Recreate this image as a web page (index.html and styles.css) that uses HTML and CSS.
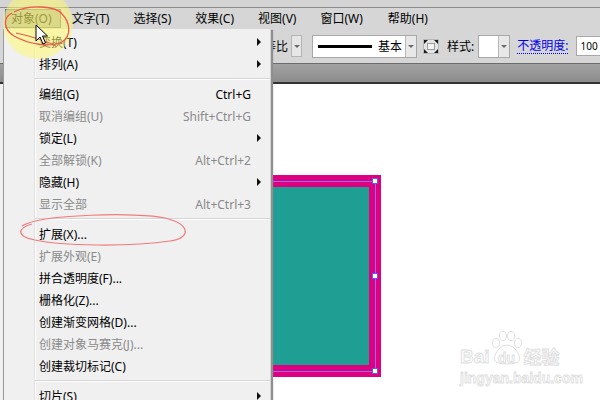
FILE: index.html
```html
<!DOCTYPE html>
<html lang="zh-CN">
<head>
<meta charset="utf-8">
<title>Illustrator 对象菜单</title>
<link rel="stylesheet" href="styles.css">
</head>
<body>
<div class="app">
  <div class="titlestrip"></div>
  <div class="menubar">
    <span class="mi active">对象(O)</span>
    <span class="mi">文字(T)</span>
    <span class="mi">选择(S)</span>
    <span class="mi">效果(C)</span>
    <span class="mi">视图(V)</span>
    <span class="mi">窗口(W)</span>
    <span class="mi help">帮助(H)</span>
  </div>
  <div class="toolbar">
    <span class="tb-text ratio">等比</span>
    <span class="dd-btn"><i class="tri-down"></i></span>
    <div class="stroke-combo">
      <span class="stroke-line"></span>
      <span class="stroke-name">基本</span>
      <span class="dd-part"><i class="tri-down"></i></span>
    </div>
    <span class="fit-icon">
      <svg width="16" height="15" viewBox="0 0 16 15">
        <rect x="0.5" y="0.5" width="15" height="14" fill="#e4e4e4" stroke="#b8b8b8"/>
        <rect x="4.5" y="4.5" width="7" height="6" fill="#f4f4f4" stroke="#9a9a9a"/>
        <path d="M1 1h4L1 5z M15 1h-4l4 4z M1 14h4L1 10z M15 14h-4l4-4z" fill="#1a1a1a"/>
      </svg>
    </span>
    <span class="tb-text style-label">样式:</span>
    <div class="swatch-combo">
      <span class="swatch"></span>
      <span class="dd-part"><i class="tri-down"></i></span>
    </div>
    <span class="opacity-link">不透明度:</span>
    <span class="num-input">100</span>
  </div>
  <div class="docbar"></div>
  <div class="canvas">
    <div class="leftpanel"></div>
    <div class="art-outer"></div>
    <div class="art-inner"></div>
    <div class="sel-v"></div>
    <div class="sel-h sel-top"></div>
    <div class="sel-h sel-bottom"></div>
    <span class="handle h1"></span>
    <span class="handle h2"></span>
    <span class="handle h3"></span>
    <div class="watermark">
      <div class="wm-logo">
        <span class="wm-bai">Bai</span>
        <span class="wm-paw">
          <svg class="paw-svg" width="36" height="36" viewBox="0 0 36 36">
            <g fill="#fff" stroke="#e2e2e2" stroke-width="1">
              <ellipse cx="7" cy="13" rx="3.5" ry="4.5"/>
              <ellipse cx="14" cy="6" rx="3.5" ry="4.5"/>
              <ellipse cx="22" cy="6" rx="3.5" ry="4.5"/>
              <ellipse cx="29" cy="13" rx="3.5" ry="4.5"/>
              <path d="M18 15 C10 15 3 27 6 31 C9 35 27 35 30 31 C33 27 26 15 18 15 Z"/>
            </g>
          </svg>
          <span class="wm-du">du</span>
        </span>
        <span class="wm-cn">经验</span>
      </div>
      <div class="wm-url">jingyan.baidu.com</div>
    </div>
  </div>

  <div class="menu">
    <div class="item"><span class="label">变换(T)</span><span class="key"></span><span class="arrow"></span></div>
    <div class="item"><span class="label">排列(A)</span><span class="key"></span><span class="arrow"></span></div>
    <div class="sep"></div>
    <div class="item"><span class="label">编组(G)</span><span class="key">Ctrl+G</span><span class="noarrow"></span></div>
    <div class="item disabled"><span class="label">取消编组(U)</span><span class="key">Shift+Ctrl+G</span><span class="noarrow"></span></div>
    <div class="item"><span class="label">锁定(L)</span><span class="key"></span><span class="arrow"></span></div>
    <div class="item disabled"><span class="label">全部解锁(K)</span><span class="key">Alt+Ctrl+2</span><span class="noarrow"></span></div>
    <div class="item"><span class="label">隐藏(H)</span><span class="key"></span><span class="arrow"></span></div>
    <div class="item disabled"><span class="label">显示全部</span><span class="key">Alt+Ctrl+3</span><span class="noarrow"></span></div>
    <div class="sep"></div>
    <div class="item"><span class="label">扩展(X)...</span><span class="key"></span><span class="noarrow"></span></div>
    <div class="item disabled"><span class="label">扩展外观(E)</span><span class="key"></span><span class="noarrow"></span></div>
    <div class="item"><span class="label">拼合透明度(F)...</span><span class="key"></span><span class="noarrow"></span></div>
    <div class="item"><span class="label">栅格化(Z)...</span><span class="key"></span><span class="noarrow"></span></div>
    <div class="item"><span class="label">创建渐变网格(D)...</span><span class="key"></span><span class="noarrow"></span></div>
    <div class="item disabled"><span class="label">创建对象马赛克(J)...</span><span class="key"></span><span class="noarrow"></span></div>
    <div class="item"><span class="label">创建裁切标记(C)</span><span class="key"></span><span class="noarrow"></span></div>
    <div class="sep"></div>
    <div class="item"><span class="label">切片(S)</span><span class="key"></span><span class="arrow"></span></div>
  </div>

  <div class="glow"></div>
  <svg class="marks" width="600" height="400" viewBox="0 0 600 400">
    <path d="M14 12 C30 4 56 6 62 14 C70 22 72 36 62 42 C50 48 28 44 14 36 C4 30 2 18 12 13" fill="none" stroke="#f0574f" stroke-width="1.3"/>
    <path d="M16 33 C30 36 44 40 56 46" fill="none" stroke="#f0574f" stroke-width="1.2"/>
    <path d="M22 226 C40 214 140 212 165 218 C190 224 192 238 170 241 C130 247 60 246 35 240 C15 236 18 228 32 224" fill="none" stroke="#f27b7b" stroke-width="1.2"/>
  </svg>
  <svg class="cursor" width="14" height="22" viewBox="0 0 14 22">
    <path d="M1 1 L1 17 L5 13 L8 20 L10.5 19 L7.5 12 L12.5 12 Z" fill="#ffffff" stroke="#000000" stroke-width="1" stroke-linejoin="miter"/>
  </svg>
</div>
</body>
</html>
```

FILE: styles.css
```css
* { box-sizing: border-box; }
html, body { margin: 0; padding: 0; }
body {
  width: 600px;
  height: 400px;
  overflow: hidden;
  font-family: "Noto Sans", "Noto Sans CJK SC", sans-serif;
  font-size: 12px;
  color: #000;
  background: #fff;
}
.app {
  position: relative;
  width: 600px;
  height: 400px;
  display: flex;
  flex-direction: column;
  overflow: hidden;
}
.titlestrip {
  height: 8px;
  background: #d4d4d4;
  border-bottom: 1px solid #8c8c8c;
  flex: none;
}
.menubar {
  height: 21px;
  background: #d6d6d6;
  display: flex;
  align-items: center;
  padding-left: 5px;
  flex: none;
}
.mi {
  flex: none;
  height: 19px;
  line-height: 18px;
  padding: 0 7px 0 5px;
  margin-right: 10px;
  border: 1px solid transparent;
  white-space: nowrap;
}
.mi.active {
  background: #ababab;
  border-color: #6f6f6f;
  margin-right: 5px;
  padding-right: 8px;
}
.mi.help { margin-left: 1px; }
.toolbar {
  height: 34px;
  background: #d6d6d6;
  display: flex;
  align-items: center;
  flex: none;
  overflow: hidden;
}
.toolbar > * { flex: none; }
.tb-text { white-space: nowrap; }
.ratio { margin-left: 264px; }
.dd-btn {
  width: 11px;
  height: 22px;
  margin-left: 3px;
  background: #e6e6e6;
  border: 1px solid #b4b4b4;
  display: flex;
  align-items: center;
  justify-content: center;
}
.tri-down {
  width: 0;
  height: 0;
  border-left: 3px solid transparent;
  border-right: 3px solid transparent;
  border-top: 3px solid #6a6a6a;
}
.stroke-combo {
  margin-left: 10px;
  width: 105px;
  height: 23px;
  background: #fff;
  border: 1px solid #a8a8a8;
  display: flex;
  align-items: center;
}
.stroke-line {
  flex: none;
  width: 54px;
  height: 3px;
  background: #000;
  margin-left: 5px;
}
.stroke-name {
  margin-left: 6px;
  flex: 1;
  white-space: nowrap;
}
.dd-part {
  flex: none;
  width: 11px;
  height: 100%;
  background: #e8e8e8;
  border-left: 1px solid #b8b8b8;
  display: flex;
  align-items: center;
  justify-content: center;
}
.fit-icon {
  margin-left: 6px;
  width: 16px;
  height: 15px;
  display: flex;
}
.style-label { margin-left: 8px; }
.swatch-combo {
  margin-left: 4px;
  width: 32px;
  height: 23px;
  border: 1px solid #a8a8a8;
  background: #fff;
  display: flex;
}
.swatch { flex: 1; background: #fff; }
.opacity-link {
  margin-left: 7px;
  color: #0000ee;
  border-bottom: 1px dotted #0000ee;
  line-height: 14px;
  white-space: nowrap;
}
.num-input {
  margin-left: 8px;
  width: 30px;
  height: 20px;
  background: #fff;
  border: 1px solid #a8a8a8;
  font-size: 10px;
  line-height: 18px;
  padding-left: 3px;
}
.docbar {
  height: 21px;
  flex: none;
  border-top: 1px solid #6c6c6c;
  border-bottom: 2px solid #333;
  background: linear-gradient(#a2a2a2, #8c8c8c);
}
.canvas {
  position: relative;
  flex: 1;
  background: #fff;
}
.leftpanel {
  position: absolute;
  left: 0; top: 0; bottom: 0;
  width: 4px;
  background: #efefef;
}
.art-outer {
  position: absolute;
  left: 230px;
  top: 91px;
  width: 151px;
  height: 202px;
  background: #dd0080;
}
.art-inner {
  position: absolute;
  left: 230px;
  top: 103px;
  width: 139px;
  height: 178px;
  background: #1f9e94;
}
.sel-v {
  position: absolute;
  left: 375px;
  top: 97px;
  width: 1px;
  height: 190px;
  background: #8a6cff;
}
.sel-h {
  position: absolute;
  left: 230px;
  width: 146px;
  height: 1px;
  background: #8a6cff;
}
.sel-top { top: 97px; }
.sel-bottom { top: 287px; }
.handle {
  position: absolute;
  width: 6px;
  height: 6px;
  background: #fff;
  border: 1px solid #5a5aff;
}
.h1 { left: 372px; top: 94px; }
.h2 { left: 372px; top: 189px; }
.h3 { left: 372px; top: 284px; }
.watermark {
  position: absolute;
  left: 460px;
  top: 250px;
  color: #fbfbfb;
  -webkit-text-stroke: 0.8px #dedede;
}
.wm-logo {
  display: flex;
  align-items: flex-end;
  height: 32px;
  white-space: nowrap;
}
.wm-bai {
  font-family: "Liberation Sans", sans-serif;
  font-size: 19px;
  font-weight: bold;
  line-height: 18px;
}
.wm-paw {
  position: relative;
  width: 34px;
  height: 32px;
  display: flex;
  align-items: flex-end;
  justify-content: center;
}
.paw-svg {
  position: absolute;
  left: -1px;
  top: -4px;
}
.wm-du {
  position: relative;
  font-family: "Liberation Sans", sans-serif;
  font-size: 14px;
  font-weight: bold;
  line-height: 16px;
}
.wm-cn {
  font-family: "Noto Sans CJK SC", sans-serif;
  font-size: 18px;
  font-weight: bold;
  line-height: 20px;
}
.wm-url {
  font-family: "Liberation Sans", sans-serif;
  font-size: 14px;
  font-weight: bold;
  margin-top: 5px;
  line-height: 15px;
}
.menu {
  position: absolute;
  left: 3px;
  top: 29px;
  width: 268px;
  height: 380px;
  background: #f0f0f0;
  border-left: 1px solid #9a9a9a;
  border-right: 1px solid #d4d4d4;
  box-shadow: 3px 0 1px -1px #8f8f8f;
  padding-top: 2px;
}
.menu::before {
  content: "";
  position: absolute;
  left: 30px;
  top: 0;
  bottom: 0;
  width: 1px;
  background: #e0e0e0;
  border-right: 1px solid #fff;
  box-sizing: content-box;
}
.item {
  position: relative;
  height: 22px;
  display: flex;
  align-items: center;
  padding-left: 35px;
}
.label { flex: 1; white-space: nowrap; }
.key { white-space: nowrap; text-align: right; }
.arrow, .noarrow {
  width: 19px;
  height: 22px;
  flex: none;
  position: relative;
}
.arrow::after {
  content: "";
  position: absolute;
  left: 6px;
  top: 7px;
  border-top: 4px solid transparent;
  border-bottom: 4px solid transparent;
  border-left: 4px solid #111;
}
.item.disabled { color: #8a8a8a; }
.sep {
  height: 8px;
  margin-left: 31px;
  position: relative;
}
.sep::after {
  content: "";
  position: absolute;
  left: 0;
  right: 0;
  top: 3px;
  height: 1px;
  background: #d6d6d6;
  border-bottom: 1px solid #fff;
  box-sizing: content-box;
}
.glow {
  position: absolute;
  left: 3px;
  top: -11px;
  width: 70px;
  height: 70px;
  border-radius: 50%;
  background: radial-gradient(circle, rgba(255,250,110,0.62) 0%, rgba(255,250,110,0.55) 60%, rgba(255,250,110,0.3) 85%, rgba(255,250,110,0) 100%);
  pointer-events: none;
}
.marks {
  position: absolute;
  left: 0;
  top: 0;
  pointer-events: none;
}
.cursor {
  position: absolute;
  left: 35px;
  top: 24px;
  pointer-events: none;
}
```
